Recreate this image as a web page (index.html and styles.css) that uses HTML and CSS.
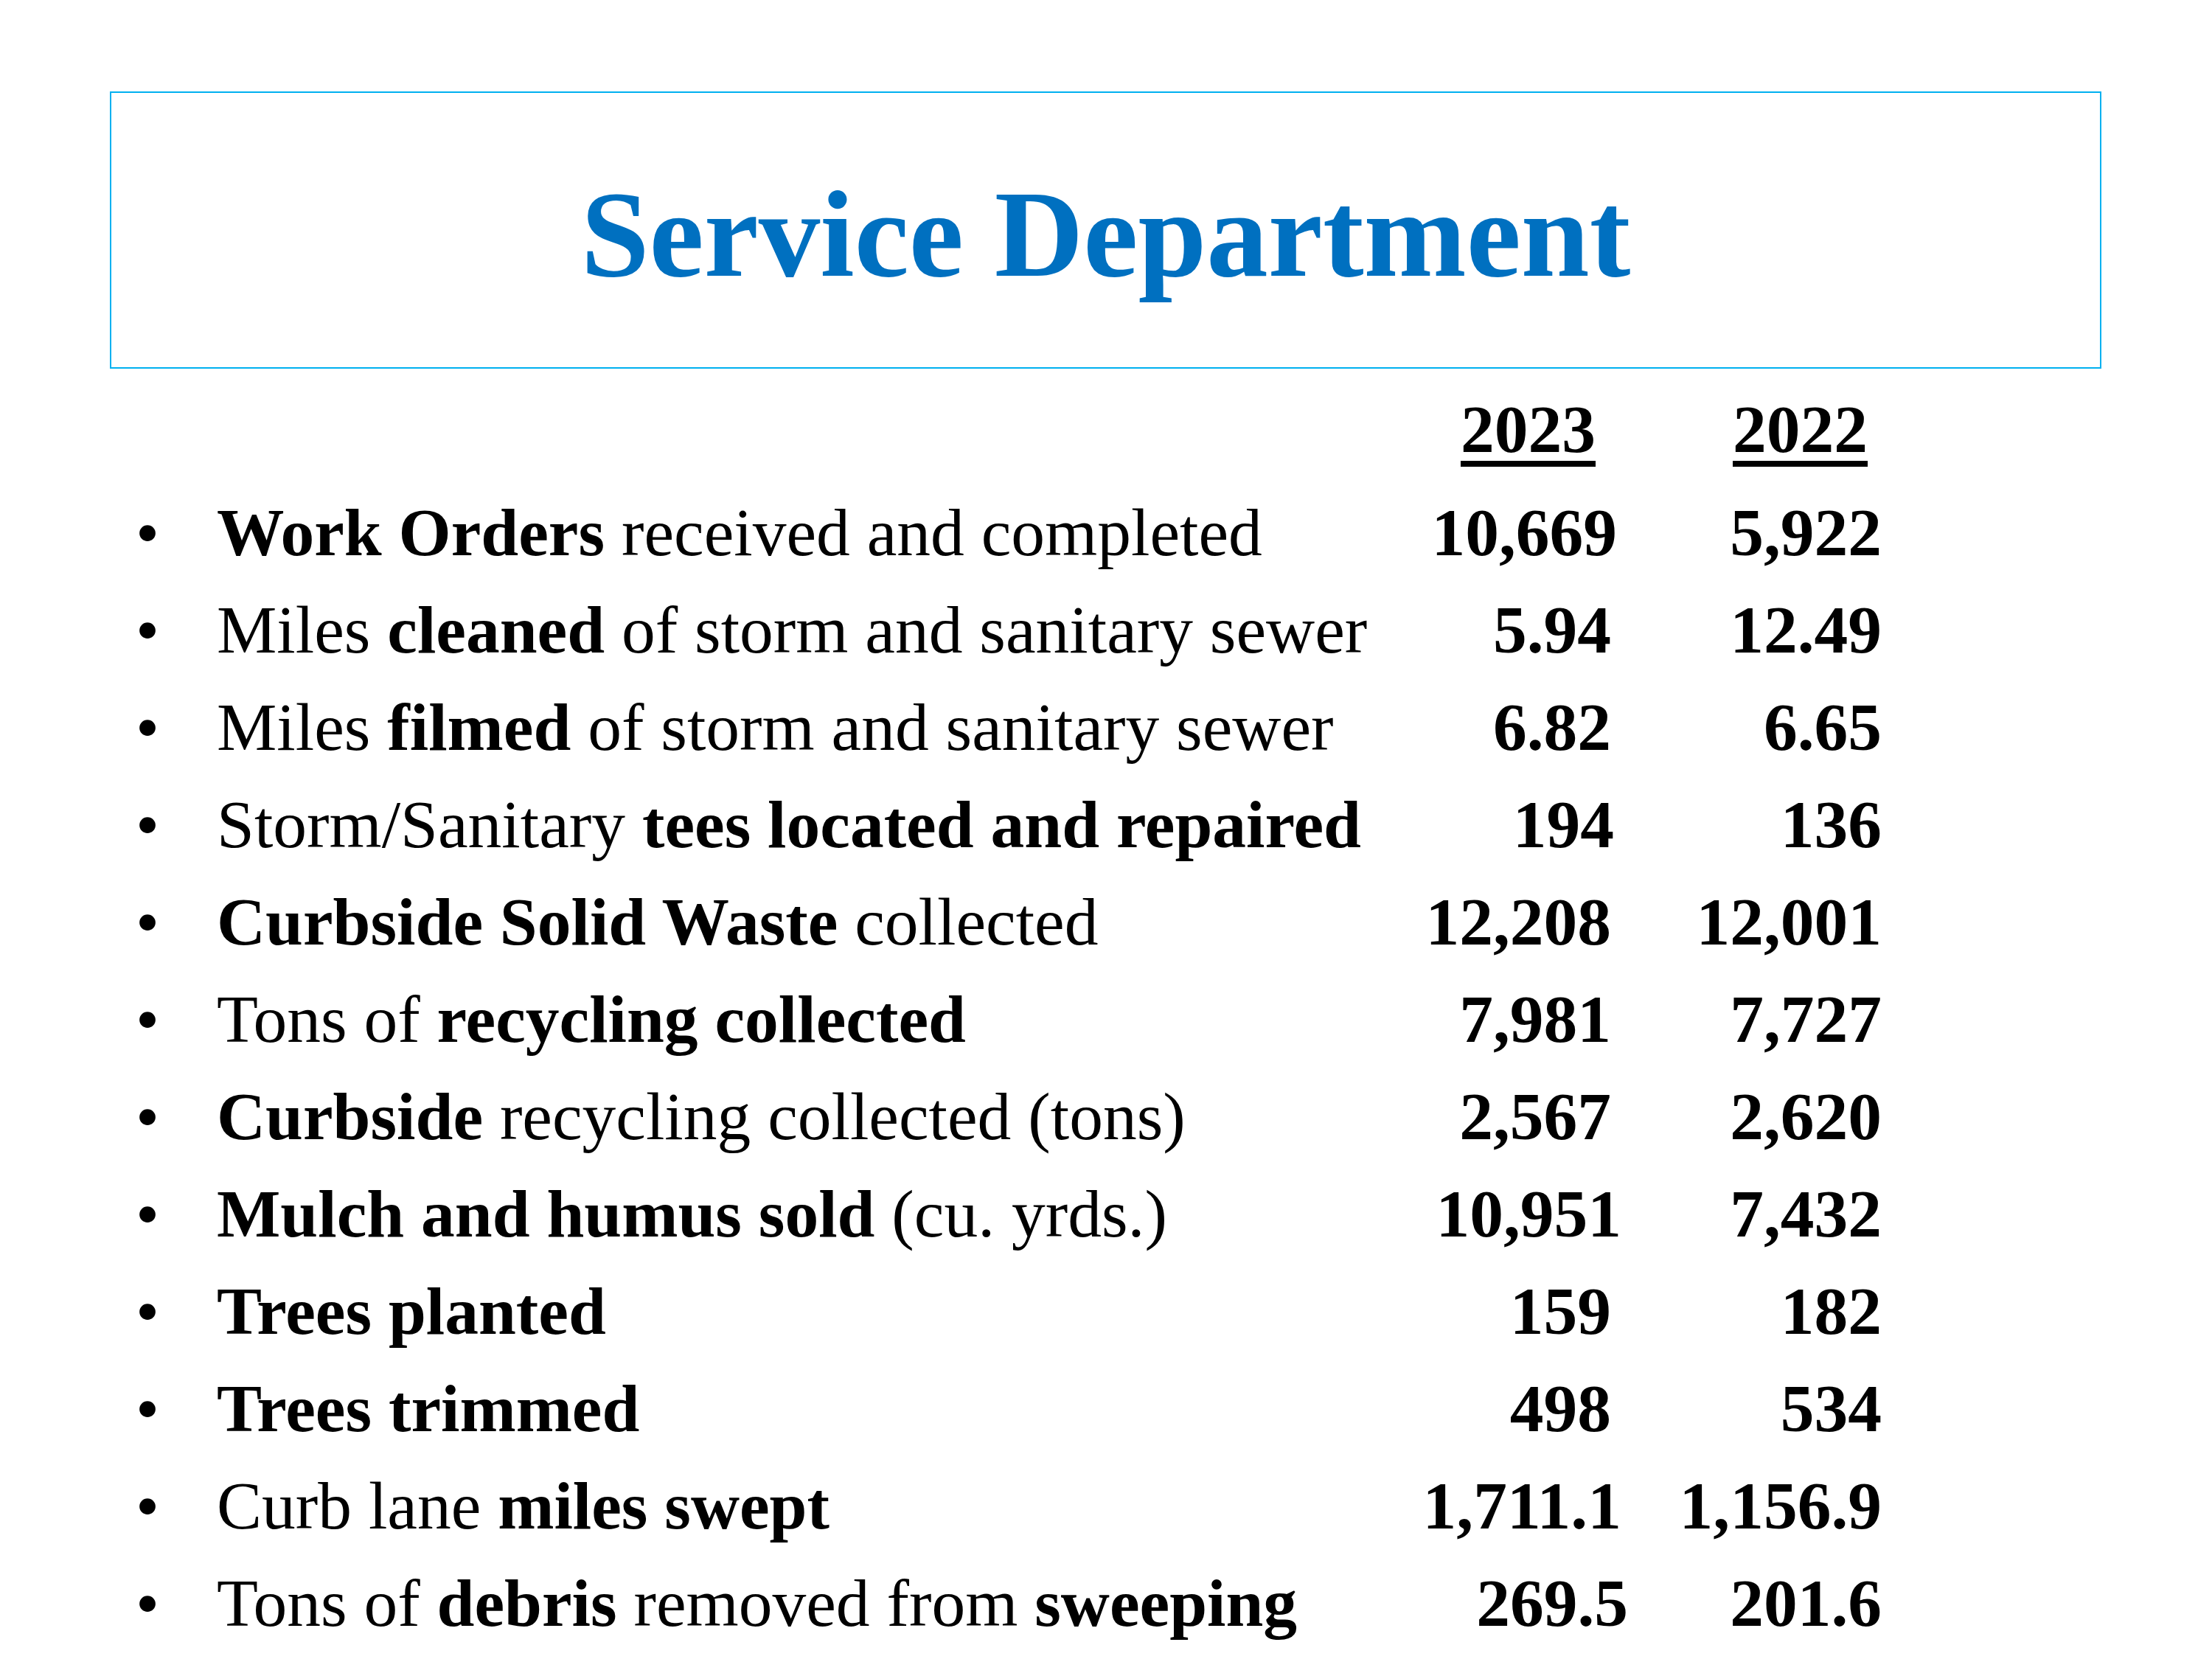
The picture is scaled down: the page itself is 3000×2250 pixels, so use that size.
FILE: index.html
```html
<!DOCTYPE html>
<html lang="en">
<head>
<meta charset="utf-8">
<title>Service Department</title>
<link rel="stylesheet" href="styles.css">
</head>
<body>
<div class="page">
  <header class="title-box">
    <h1 class="title">Service Department</h1>
  </header>
  <div class="stats">
    <div class="row head">
      <span></span><span></span>
      <span class="num yr yr1">2023</span>
      <span class="num yr yr2">2022</span>
    </div>
    <div class="row"><span class="bullet">•</span><span class="label"><b>Work Orders</b> received and completed</span><span class="num n1 adj-a">10,669</span><span class="num n2">5,922</span></div>
    <div class="row"><span class="bullet">•</span><span class="label">Miles <b>cleaned</b> of storm and sanitary sewer</span><span class="num n1">5.94</span><span class="num n2">12.49</span></div>
    <div class="row"><span class="bullet">•</span><span class="label">Miles <b>filmed</b> of storm and sanitary sewer</span><span class="num n1">6.82</span><span class="num n2">6.65</span></div>
    <div class="row"><span class="bullet">•</span><span class="label">Storm/Sanitary <b>tees located and repaired</b></span><span class="num n1 adj-s">194</span><span class="num n2">136</span></div>
    <div class="row"><span class="bullet">•</span><span class="label"><b>Curbside Solid Waste</b> collected</span><span class="num n1">12,208</span><span class="num n2">12,001</span></div>
    <div class="row"><span class="bullet">•</span><span class="label">Tons of <b>recycling collected</b></span><span class="num n1">7,981</span><span class="num n2">7,727</span></div>
    <div class="row"><span class="bullet">•</span><span class="label"><b>Curbside</b> recycling collected (tons)</span><span class="num n1">2,567</span><span class="num n2">2,620</span></div>
    <div class="row"><span class="bullet">•</span><span class="label"><b>Mulch and humus sold</b> (cu. yrds.)</span><span class="num n1 adj-b">10,951</span><span class="num n2">7,432</span></div>
    <div class="row"><span class="bullet">•</span><span class="label"><b>Trees planted</b></span><span class="num n1">159</span><span class="num n2">182</span></div>
    <div class="row"><span class="bullet">•</span><span class="label"><b>Trees trimmed</b></span><span class="num n1">498</span><span class="num n2">534</span></div>
    <div class="row"><span class="bullet">•</span><span class="label">Curb lane <b>miles swept</b></span><span class="num n1 adj-b">1,711.1</span><span class="num n2">1,156.9</span></div>
    <div class="row"><span class="bullet">•</span><span class="label">Tons of <b>debris</b> removed from <b>sweeping</b></span><span class="num n1 adj-c">269.5</span><span class="num n2">201.6</span></div>
  </div>
</div>
</body>
</html>
```
FILE: styles.css
```css
html, body {
  margin: 0;
  padding: 0;
  background: #ffffff;
}

body {
  font-family: "Liberation Serif", "Times New Roman", serif;
  color: #000000;
}

.page {
  padding-top: 124px;
  padding-left: 149px;
  width: 2701px;
}

.title-box {
  box-sizing: border-box;
  width: 2701px;
  height: 376px;
  border: 2px solid #00b0f0;
  padding-top: 92px;
}

.title {
  margin: 0;
  font-size: 167px;
  line-height: 200px;
  font-weight: bold;
  color: #0070c0;
  text-align: center;
}

.stats {
  margin-top: 16px;
  margin-left: 31px;
}

.row {
  display: grid;
  grid-template-columns: 114px 1600px 316px 342px;
  font-size: 91.5px;
  line-height: 132px;
  white-space: nowrap;
}

.row.head {
  margin-bottom: 8px;
}

.bullet {
  padding-left: 4px;
}

.label b,
.num {
  font-weight: bold;
}

.num {
  text-align: right;
}

.n1 {
  padding-right: 25px;
}

.n1.adj-s {
  padding-right: 21px;
}

.n1.adj-a {
  padding-right: 17px;
}

.n1.adj-b {
  padding-right: 11px;
}

.n1.adj-c {
  padding-right: 2px;
}

.yr {
  text-decoration: underline;
  text-decoration-thickness: 8px;
  text-underline-offset: 12px;
}

.yr1 {
  padding-right: 46px;
}

.yr2 {
  padding-right: 19px;
}
```
